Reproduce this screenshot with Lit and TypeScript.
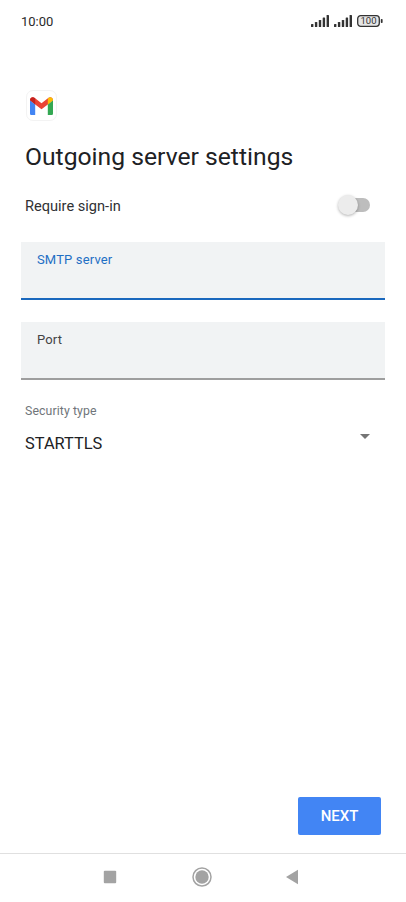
import { LitElement, html, css, svg } from "lit";
import { customElement } from "lit/decorators.js";

const bars = () => svg`
  <rect x="0" y="9" width="2.4" height="3" rx="0.6"/>
  <rect x="3.900" y="7" width="2.400" height="5" rx="0.6"/>
  <rect x="7.800" y="5" width="2.400" height="7" rx="0.6"/>
  <rect x="11.700" y="2.500" width="2.400" height="9.500" rx="0.6"/>
  <rect x="15.600" y="0" width="2.400" height="12" rx="0.6"/>`;

@customElement("app-root")
export class AppRoot extends LitElement {
  static styles = css`
    :host {
      display: flex;
      flex-direction: column;
      width: 406px;
      height: 902px;
      background: #fff;
      font-family: Roboto, "Liberation Sans", sans-serif;
      color: #202124;
      overflow: hidden;
    }
    .status {
      height: 42px;
      box-sizing: border-box;
      padding: 0 23px 0 21px;
      display: flex;
      align-items: center;
      justify-content: space-between;
    }
    .time { font-size: 13px; color: #2a2a2a; }
    .status-icons { display: flex; align-items: center; gap: 5px; }
    .signal { width: 18px; height: 12px; fill: #333; display: block; }
    .battery { width: 26px; height: 12px; display: block; }
    .main { flex: 1; display: flex; flex-direction: column; padding: 48px 21px 0; }
    .logo {
      width: 31px;
      height: 31px;
      margin-left: 5px;
      box-sizing: border-box;
      border: 1px solid #f3f3f3;
      border-radius: 7px;
      display: flex;
      align-items: center;
      justify-content: center;
    }
    .logo svg { width: 23px; height: 18px; display: block; }
    h1 {
      margin: 20px 0 0 4px;
      font-size: 24.700px;
      line-height: 32px;
      font-weight: 400;
      color: #202124;
    }
    .signin {
      margin: 16px 0 0 4px;
      height: 32px;
      display: flex;
      align-items: center;
      justify-content: space-between;
      font-size: 14.600px;
      color: #303134;
      padding-right: 15px;
    }
    .signin span { padding-top: 1px; }
    .switch { position: relative; width: 32px; height: 14px; }
    .track {
      position: absolute;
      left: 10px;
      right: 0;
      top: 0;
      bottom: 0;
      background: #bdbdbd;
      border-radius: 7px;
    }
    .thumb {
      position: absolute;
      left: 0;
      top: -3px;
      width: 20px;
      height: 20px;
      border-radius: 50%;
      background: #ececec;
      box-shadow: 0 1px 3px rgba(0, 0, 0, 0.3);
    }
    .field {
      height: 58px;
      box-sizing: border-box;
      background: #f1f3f4;
      border-bottom: 2px solid #9e9e9e;
      padding: 10px 16px 0;
      font-size: 13px;
      line-height: 16px;
      letter-spacing: 0.15px;
      color: #444;
    }
    .field.smtp {
      margin-top: 21px;
      color: #1f6fc4;
      border-bottom-color: #1a68bd;
    }
    .field.port { margin-top: 22px; }
    .security-label {
      margin: 23px 0 0 4px;
      font-size: 12.300px;
      line-height: 16px;
      letter-spacing: 0.1px;
      color: #70757a;
    }
    .select {
      margin: 13px 0 0 4px;
      display: flex;
      justify-content: space-between;
      padding-right: 15px;
      font-size: 16.400px;
      line-height: 24px;
      color: #202124;
    }
    .caret {
      width: 0;
      height: 0;
      margin-top: 2px;
      border-left: 5.500px solid transparent;
      border-right: 5.500px solid transparent;
      border-top: 5.500px solid #757575;
    }
    .actions {
      margin-top: auto;
      display: flex;
      justify-content: flex-end;
      padding: 0 4px 18px 0;
    }
    .next {
      width: 83px;
      height: 38px;
      border: 0;
      border-radius: 2px;
      background: #4285f4;
      color: #fff;
      font: 500 15px Roboto, "Liberation Sans", sans-serif;
      padding: 0;
    }
    .nav {
      height: 49px;
      box-sizing: border-box;
      border-top: 1px solid #e0e0e0;
      display: flex;
      align-items: center;
      gap: 70px;
      padding: 0 0 2px 99px;
    }
    .nav svg { width: 22px; height: 22px; display: block; fill: #a3a3a3; }
    .nav svg.back { margin-left: -2px; }
  `;

  render() {
    return html`
      <div class="status">
        <span class="time">10:00</span>
        <div class="status-icons">
          <svg class="signal" viewBox="0 0 18 12">${bars()}</svg>
          <svg class="signal" viewBox="0 0 18 12">${bars()}</svg>
          <svg class="battery" viewBox="0 0 26 12">
            <rect x="0.700" y="0.700" width="21.600" height="10.600" rx="3" fill="#e6e6e6" stroke="#333" stroke-width="1.300"/>
            <rect x="23.800" y="4" width="1.800" height="4" rx="0.7" fill="#333"/>
            <text x="11.500" y="9.400" font-size="9.500" text-anchor="middle" fill="#333" font-family="Roboto, sans-serif">100</text>
          </svg>
        </div>
      </div>
      <div class="main">
        <div class="logo">
          <svg viewBox="0 0 23 18">
            <path d="M0 3.200 C0 0.600 2.800 -0.600 4.800 1 L11.500 6.200 L18.200 1 C20.200 -0.600 23 0.600 23 3.200 L17.800 7.400 L11.500 12.200 L5.200 7.400 Z" fill="#ea4335"/>
            <path d="M0 3.200 L5.200 7.400 V18 H1.600 C0.700 18 0 17.300 0 16.400 Z" fill="#4285f4"/>
            <path d="M23 3.200 L17.800 7.400 V18 H21.400 C22.300 18 23 17.300 23 16.400 Z" fill="#34a853"/>
            <path d="M17.800 2.400 L18.200 1 C20.200 -0.600 23 0.600 23 3.200 L17.800 7.400 Z" fill="#fbbc04"/>
            <path d="M0 3.200 C0 0.600 2.800 -0.600 4.800 1 L5.200 1.300 V7.400 Z" fill="#c5221f"/>
          </svg>
        </div>
        <h1>Outgoing server settings</h1>
        <div class="signin">
          <span>Require sign-in</span>
          <div class="switch"><div class="track"></div><div class="thumb"></div></div>
        </div>
        <div class="field smtp">SMTP server</div>
        <div class="field port">Port</div>
        <div class="security-label">Security type</div>
        <div class="select"><span>STARTTLS</span><span class="caret"></span></div>
        <div class="actions"><button class="next">NEXT</button></div>
      </div>
      <div class="nav">
        <svg viewBox="0 0 22 22"><rect x="4.800" y="4.800" width="12.400" height="12.400" rx="1"/></svg>
        <svg viewBox="0 0 22 22">
          <circle cx="11" cy="11" r="9" fill="none" stroke="#a3a3a3" stroke-width="1.500"/>
          <circle cx="11" cy="11" r="6.700"/>
        </svg>
        <svg class="back" viewBox="0 0 22 22"><path d="M17 3.800 V18.200 L5 11 Z"/></svg>
      </div>
    `;
  }
}
